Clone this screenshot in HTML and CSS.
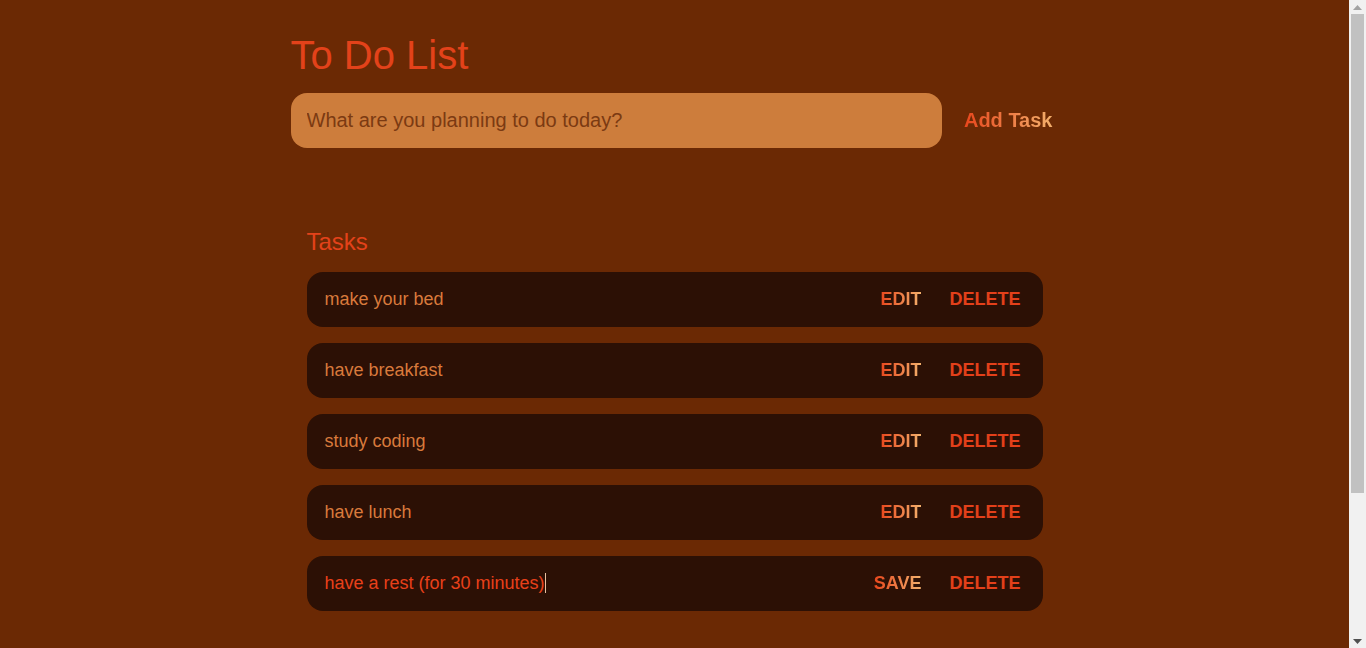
FILE: index.html
```html
<!DOCTYPE html>
<html lang="en">
<head>
<meta charset="utf-8">
<title>To Do List</title>
<link rel="stylesheet" href="styles.css">
</head>
<body>
<main class="app">
  <h1 class="title">To Do List</h1>
  <form class="new-task">
    <input class="new-task-input" type="text" placeholder="What are you planning to do today?">
    <button class="add-btn" type="button"><span class="grad">Add Task</span></button>
  </form>
  <section class="tasks">
    <h2 class="tasks-title">Tasks</h2>
    <div class="task-list">
      <div class="task">
        <div class="task-text">make your bed</div>
        <div class="actions"><button class="edit"><span class="grad">Edit</span></button><button class="delete">Delete</button></div>
      </div>
      <div class="task">
        <div class="task-text">have breakfast</div>
        <div class="actions"><button class="edit"><span class="grad">Edit</span></button><button class="delete">Delete</button></div>
      </div>
      <div class="task">
        <div class="task-text">study coding</div>
        <div class="actions"><button class="edit"><span class="grad">Edit</span></button><button class="delete">Delete</button></div>
      </div>
      <div class="task">
        <div class="task-text">have lunch</div>
        <div class="actions"><button class="edit"><span class="grad">Edit</span></button><button class="delete">Delete</button></div>
      </div>
      <div class="task editing">
        <div class="task-text">have a rest (for 30 minutes)<span class="caret"></span></div>
        <div class="actions"><button class="edit"><span class="grad">Save</span></button><button class="delete">Delete</button></div>
      </div>
    </div>
  </section>
</main>
<div class="scrollbar" aria-hidden="true">
  <div class="sb-arrow"><svg width="9" height="5" viewBox="0 0 9 5"><path d="M4.5 0 L9 5 L0 5 Z" fill="#a3a3a3"/></svg></div>
  <div class="sb-track"><div class="sb-thumb"></div></div>
  <div class="sb-arrow"><svg width="9" height="5" viewBox="0 0 9 5"><path d="M0 0 L9 0 L4.5 5 Z" fill="#505050"/></svg></div>
</div>
</body>
</html>
```
FILE: styles.css
```css
* { box-sizing: border-box; }
html, body { margin: 0; padding: 0; }
body {
  background: #6b2904;
  font-family: "Liberation Sans", Arial, sans-serif;
  color: #d77a3a;
  padding-right: 17px;
}
.app {
  max-width: 800px;
  margin: 0 auto;
  padding: 32px 16px 220px;
}
.title {
  margin: 0 0 15px;
  font-size: 40px;
  font-weight: 400;
  line-height: 46px;
  color: #e3421a;
}
.new-task {
  display: flex;
  align-items: center;
  margin: 0;
}
.new-task-input {
  flex: 1;
  height: 55px;
  border: none;
  outline: none;
  border-radius: 16px;
  background: #cd7d3c;
  padding: 0 16px;
  font-family: inherit;
  font-size: 20px;
  color: #6b2904;
}
.new-task-input::placeholder { color: #7b3a12; }
.add-btn {
  margin-left: 16px;
  padding: 0 6px;
  background: none;
  border: none;
  font-family: inherit;
  font-size: 20px;
  font-weight: 700;
  cursor: pointer;
}
.grad {
  background: linear-gradient(to right, #e8461c, #f4b06c);
  -webkit-background-clip: text;
  background-clip: text;
  color: transparent;
}
.tasks {
  padding: 80px 16px 0;
}
.tasks-title {
  margin: 0 0 16px;
  font-size: 24px;
  font-weight: 400;
  line-height: 28px;
  color: #e3421a;
}
.task-list {
  display: flex;
  flex-direction: column;
  gap: 16px;
}
.task {
  display: flex;
  align-items: center;
  justify-content: space-between;
  height: 55px;
  padding: 0 22px 0 18px;
  background: #2c1005;
  border-radius: 16px;
}
.task-text {
  font-size: 18px;
  color: #d97a3c;
}
.task.editing .task-text { color: #e8401a; }
.caret {
  display: inline-block;
  width: 1px;
  height: 20px;
  background: #e8c0a0;
  vertical-align: -4px;
}
.actions {
  display: flex;
  align-items: center;
  gap: 28px;
}
.actions button {
  background: none;
  border: none;
  padding: 0;
  font-family: inherit;
  font-size: 18px;
  font-weight: 700;
  text-transform: uppercase;
  cursor: pointer;
}
.delete { color: #e3401a; }

.scrollbar {
  position: fixed;
  top: 0;
  right: 0;
  width: 17px;
  height: 100vh;
  background: #f1f1f1;
  display: flex;
  flex-direction: column;
}
.sb-arrow {
  height: 14px;
  display: flex;
  align-items: center;
  justify-content: center;
}
.sb-track {
  flex: 1;
  padding: 0 2px;
  display: flex;
  flex-direction: column;
}
.sb-thumb {
  height: 479px;
  background: #c1c1c1;
}
```
